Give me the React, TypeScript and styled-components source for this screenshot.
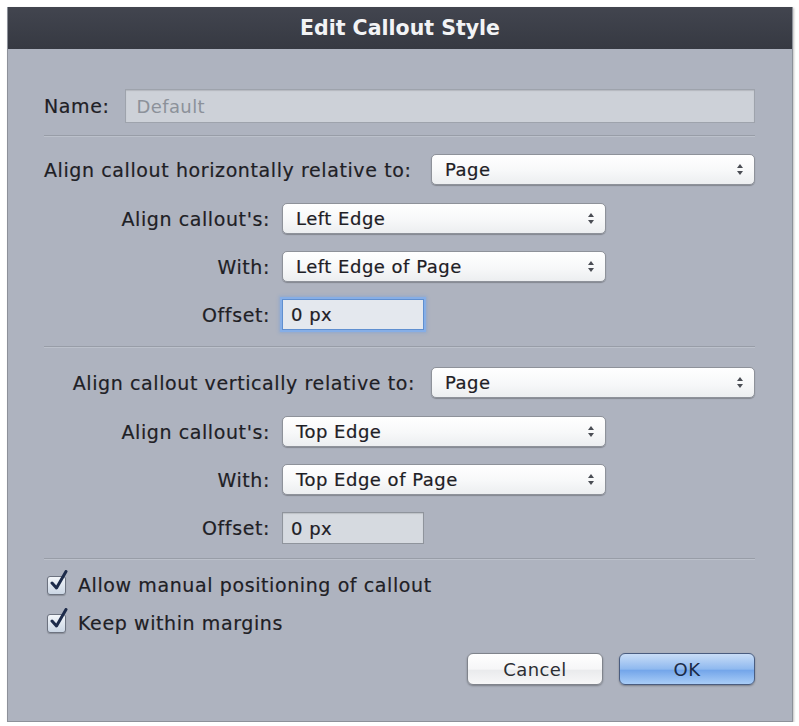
import React from "react";
import styled, { createGlobalStyle } from "styled-components";

const Global = createGlobalStyle`
  html, body { margin: 0; padding: 0; background: #ffffff; }
  body { font-family: "DejaVu Sans", "Liberation Sans", sans-serif; }
`;

const Page = styled.div`
  padding: 7px 0 0 7px;
`;

const Dialog = styled.div`
  width: 786px;
  height: 715px;
  box-sizing: border-box;
  background: #aeb3bf;
  border: 1px solid #8d919a;
  border-top: none;
  display: flex;
  flex-direction: column;
  box-shadow: 1px 1px 2px rgba(0, 0, 0, 0.25);
`;

const TitleBar = styled.div`
  height: 42px;
  background: linear-gradient(#42454f, #363942);
  color: #f2f3f5;
  font-size: 20.5px;
  font-weight: bold;
  display: flex;
  align-items: center;
  justify-content: center;
`;

const Body = styled.div`
  flex: 1;
  padding: 40px 37px 0 36px;
  display: flex;
  flex-direction: column;
`;

const Label = styled.span<{ $align?: "left" | "right" }>`
  font-size: 19px;
  letter-spacing: 0.6px;
  color: #1e2025;
  -webkit-text-stroke: 0.2px #1e2025;
  white-space: nowrap;
  text-align: ${(p) => p.$align ?? "left"};
`;

const NameRow = styled.div`
  display: flex;
  align-items: center;
  gap: 16px;
`;

const NameInput = styled.div`
  flex: 1;
  height: 34px;
  box-sizing: border-box;
  background: #cdd1d8;
  border: 1px solid #9ea3ac;
  box-shadow: inset 0 1px 1px rgba(0, 0, 0, 0.12);
  display: flex;
  align-items: center;
  padding-left: 10px;
  font-size: 18px;
  letter-spacing: 0.4px;
  color: #8c919a;
`;

const Separator = styled.div<{ $top: number }>`
  margin-top: ${(p) => p.$top}px;
  height: 1px;
  background: #989da7;
  border-bottom: 1px solid #bcc1cb;
`;

const MainGrid = styled.div<{ $top: number }>`
  margin-top: ${(p) => p.$top}px;
  display: grid;
  grid-template-columns: 371px 1fr;
  column-gap: 16px;
  align-items: center;
`;

const SubGrid = styled.div`
  margin-top: 18px;
  display: grid;
  grid-template-columns: 226px 324px;
  column-gap: 12px;
  row-gap: 17px;
  align-items: center;
`;

const Select = styled.div`
  height: 31px;
  box-sizing: border-box;
  border-radius: 5px;
  background: linear-gradient(#ffffff 0%, #f7f8f9 55%, #eceef0 100%);
  border: 1px solid #8e929a;
  box-shadow: 0 1px 1px rgba(0, 0, 0, 0.25);
  display: flex;
  align-items: center;
  justify-content: space-between;
  padding: 0 10px 0 13px;
  font-size: 18px;
  letter-spacing: 0.5px;
  color: #1e2025;
  -webkit-text-stroke: 0.2px #1e2025;
`;

const Arrows = () => (
  <svg width="8" height="13" viewBox="0 0 8 13">
    <path d="M4 1 L7 5 L1 5 Z" fill="#4a4d54" />
    <path d="M4 12 L7 8 L1 8 Z" fill="#4a4d54" />
  </svg>
);

const OffsetInput = styled.div<{ $focused?: boolean }>`
  width: 142px;
  height: ${(p) => (p.$focused ? 31 : 32)}px;
  box-sizing: border-box;
  background: ${(p) => (p.$focused ? "#e4e8ee" : "#d6dae0")};
  border: 1px solid ${(p) => (p.$focused ? "#5f8fd0" : "#8f949c")};
  box-shadow: ${(p) =>
    p.$focused
      ? "0 0 0 2px #86aee6, 0 0 3px 3px rgba(110,155,220,0.45)"
      : "inset 0 1px 1px rgba(0,0,0,0.12)"};
  display: flex;
  align-items: center;
  padding-left: 8px;
  font-size: 18px;
  letter-spacing: 0.5px;
  color: #1e2025;
  -webkit-text-stroke: 0.2px #1e2025;
`;

const OffsetCell = styled.div`
  display: flex;
`;

const CheckList = styled.div`
  margin-top: 14px;
  display: flex;
  flex-direction: column;
  gap: 16px;
  padding-left: 3px;
`;

const CheckRow = styled.label`
  display: flex;
  align-items: center;
  gap: 12px;
`;

const Box = styled.span`
  position: relative;
  width: 19px;
  height: 19px;
  box-sizing: border-box;
  border-radius: 3px;
  border: 1px solid #6d7380;
  background: linear-gradient(#f3f6fa, #cbd6e4);
  box-shadow: 0 1px 1px rgba(0, 0, 0, 0.2);
`;

const Tick = styled.svg`
  position: absolute;
  left: 1px;
  top: -7px;
`;

const CheckBox = () => (
  <Box>
    <Tick width="20" height="22" viewBox="0 0 20 22">
      <path
        d="M3 13 L7.5 18 L17 1.5"
        fill="none"
        stroke="#1d2b4a"
        strokeWidth="3"
        strokeLinecap="round"
        strokeLinejoin="round"
      />
    </Tick>
  </Box>
);

const Buttons = styled.div`
  margin-top: 19px;
  display: flex;
  justify-content: flex-end;
  gap: 16px;
`;

const Button = styled.button<{ $primary?: boolean }>`
  width: 136px;
  height: 32px;
  border-radius: 6px;
  font-family: inherit;
  font-size: 18px;
  letter-spacing: 0.4px;
  color: ${(p) => (p.$primary ? "#1b2a46" : "#2c2e33")};
  border: 1px solid ${(p) => (p.$primary ? "#4a5d80" : "#80848c")};
  background: ${(p) =>
    p.$primary
      ? "linear-gradient(#c9ddf7 0%, #8fb9ef 50%, #74a6ea 55%, #a9cdf7 100%)"
      : "linear-gradient(#ffffff 0%, #f6f6f7 50%, #eaebed 55%, #f7f7f8 100%)"};
  box-shadow: 0 1px 2px rgba(0, 0, 0, 0.3);
  padding: 0;
`;

type SelectProps = { value: string };
const Dropdown = ({ value }: SelectProps) => (
  <Select>
    <span>{value}</span>
    <Arrows />
  </Select>
);

type SectionProps = {
  heading: string;
  headingAlign: "left" | "right";
  edge: string;
  target: string;
  focused?: boolean;
  top: number;
};

const AlignSection = ({ heading, headingAlign, edge, target, focused, top }: SectionProps) => (
  <>
    <MainGrid $top={top}>
      <Label $align={headingAlign}>{heading}</Label>
      <Dropdown value="Page" />
    </MainGrid>
    <SubGrid>
      <Label $align="right">Align callout's:</Label>
      <Dropdown value={edge} />
      <Label $align="right">With:</Label>
      <Dropdown value={target} />
      <Label $align="right">Offset:</Label>
      <OffsetCell>
        <OffsetInput $focused={focused}>0 px</OffsetInput>
      </OffsetCell>
    </SubGrid>
  </>
);

export default function App() {
  return (
    <Page>
      <Global />
      <Dialog>
        <TitleBar>Edit Callout Style</TitleBar>
        <Body>
          <NameRow>
            <Label>Name:</Label>
            <NameInput>Default</NameInput>
          </NameRow>
          <Separator $top={12} />
          <AlignSection
            top={17}
            heading="Align callout horizontally relative to:"
            headingAlign="left"
            edge="Left Edge"
            target="Left Edge of Page"
            focused
          />
          <Separator $top={16} />
          <AlignSection
            top={19}
            heading="Align callout vertically relative to:"
            headingAlign="right"
            edge="Top Edge"
            target="Top Edge of Page"
          />
          <Separator $top={14} />
          <CheckList>
            <CheckRow>
              <CheckBox />
              <Label>Allow manual positioning of callout</Label>
            </CheckRow>
            <CheckRow>
              <CheckBox />
              <Label>Keep within margins</Label>
            </CheckRow>
          </CheckList>
          <Buttons>
            <Button>Cancel</Button>
            <Button $primary>OK</Button>
          </Buttons>
        </Body>
      </Dialog>
    </Page>
  );
}
